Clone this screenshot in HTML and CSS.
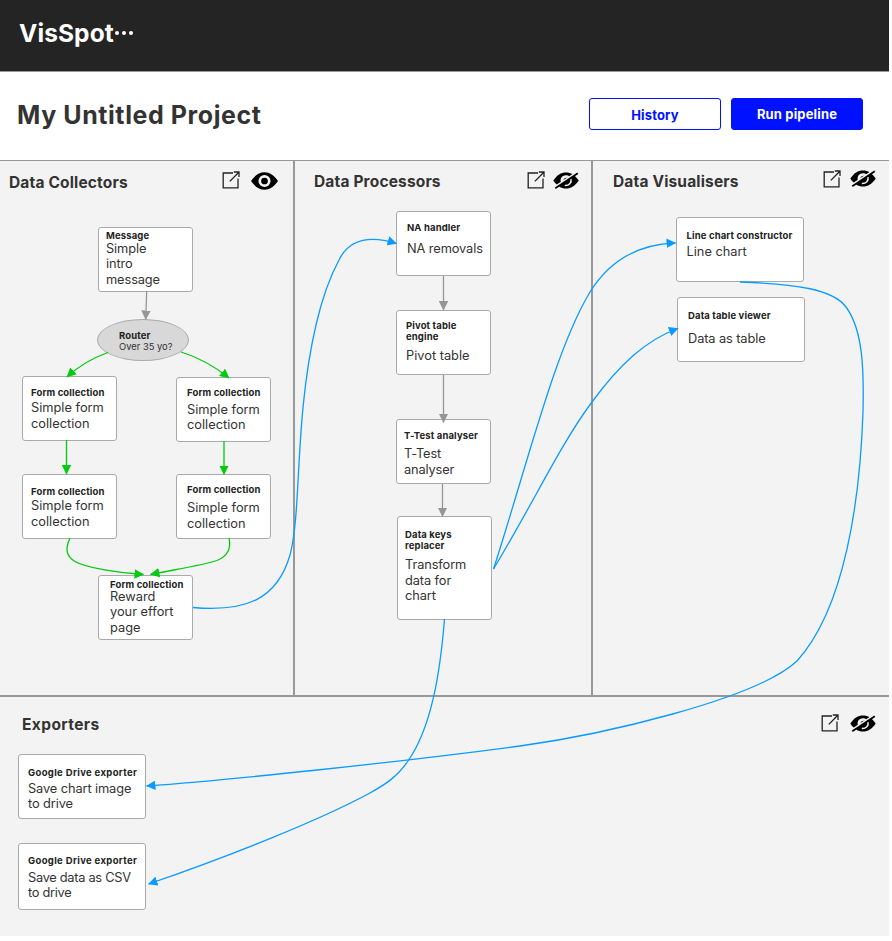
FILE: index.html
```html
<!DOCTYPE html>
<html lang="en">
<head>
<meta charset="utf-8">
<title>VisSpot</title>
<link rel="stylesheet" href="styles.css">
</head>
<body>
<svg class="defs" width="0" height="0" aria-hidden="true">
  <symbol id="i-open" viewBox="0 0 18 18"><path d="M11 2H1.200V16.800H16V7.500M7.800 10.400 16.800 1.200M11.800 1H17V6" fill="none" stroke="#222" stroke-width="1.300"/></symbol>
  <symbol id="i-eye" viewBox="0 0 27 18"><path d="M0 9C4 3.300 8.300 .3 13.500 .3S23 3.300 27 9C23 14.700 18.700 17.700 13.500 17.700S4 14.700 0 9Z"/><circle cx="13.500" cy="9" r="4.700" fill="none" stroke="#f3f3f3" stroke-width="2.700"/></symbol>
  <symbol id="i-hidden" viewBox="0 0 26 17"><path d="M.3 8.500C4 3 8 .4 13 .4S22 3 25.700 8.500C22 14 18 16.600 13 16.600S4 14 .3 8.500Z"/><path d="M8.600 11.400C6 7.500 8.800 3.300 13 3.300C14.300 3.300 15.300 3.600 16.300 4.400L14.500 5.900C11.600 5.600 10 7.400 10.500 9.500Z" fill="#f3f3f3"/><path d="M17.900 7C19 10.600 16 13.900 11.800 13.600" fill="none" stroke="#f3f3f3" stroke-width="1.500"/><path d="M1.400 15.600 23.900 .5" stroke="#f3f3f3" stroke-width="2.400"/><path d="M2.300 16.300 24.800 1.200" stroke="#000" stroke-width="1.700"/></symbol>
</svg>
<div class="page">
  <header class="topbar"><span class="brand">VisSpot</span><span class="dots"><i></i><i></i><i></i></span></header>
  <div class="titlebar">
    <h1>My Untitled Project</h1>
    <div class="actions"><button class="btn outline">History</button><button class="btn solid">Run pipeline</button></div>
  </div>
  <main class="board">
    <section class="panel collectors"><h2>Data Collectors</h2><svg class="open"><use href="#i-open"/></svg><svg class="eye"><use href="#i-eye"/></svg></section>
    <section class="panel processors"><h2>Data Processors</h2><svg class="open"><use href="#i-open"/></svg><svg class="hidden"><use href="#i-hidden"/></svg></section>
    <section class="panel visualisers"><h2>Data Visualisers</h2><svg class="open"><use href="#i-open"/></svg><svg class="hidden"><use href="#i-hidden"/></svg></section>
    <section class="panel exporters"><h2>Exporters</h2><svg class="open"><use href="#i-open"/></svg><svg class="hidden"><use href="#i-hidden"/></svg></section>
  </main>
  <div class="canvas">
    <div class="node message"><b>Message</b><p>Simple<br>intro<br>message</p></div>
    <div class="node router"><b>Router</b><p>Over 35 yo?</p></div>
    <div class="node form-a"><b>Form collection</b><p>Simple form<br>collection</p></div>
    <div class="node form-b"><b>Form collection</b><p>Simple form<br>collection</p></div>
    <div class="node form-c"><b>Form collection</b><p>Simple form<br>collection</p></div>
    <div class="node form-d"><b>Form collection</b><p>Simple form<br>collection</p></div>
    <div class="node reward"><b>Form collection</b><p>Reward<br>your effort<br>page</p></div>
    <div class="node na"><b>NA handler</b><p>NA removals</p></div>
    <div class="node pivot"><b>Pivot table<br>engine</b><p>Pivot table</p></div>
    <div class="node ttest"><b>T-Test analyser</b><p>T-Test<br>analyser</p></div>
    <div class="node keys"><b>Data keys<br>replacer</b><p>Transform<br>data for<br>chart</p></div>
    <div class="node line"><b>Line chart constructor</b><p>Line chart</p></div>
    <div class="node table"><b>Data table viewer</b><p>Data as table</p></div>
    <div class="node drive-a"><b>Google Drive exporter</b><p>Save chart image<br>to drive</p></div>
    <div class="node drive-b"><b>Google Drive exporter</b><p>Save data as CSV<br>to drive</p></div>
    <svg class="edges" width="889" height="936" viewBox="0 0 889 936">
      <defs>
        <marker id="m-grey" viewBox="0 0 9 9" markerWidth="9.500" markerHeight="9.500" refX="8.500" refY="4.500" orient="auto" markerUnits="userSpaceOnUse"><path d="M0 0 9 4.500 0 9Z" fill="#969696"/></marker>
        <marker id="m-green" viewBox="0 0 9 9" markerWidth="9.500" markerHeight="9.500" refX="8.500" refY="4.500" orient="auto" markerUnits="userSpaceOnUse"><path d="M0 0 9 4.500 0 9Z" fill="#00cb0e"/></marker>
        <marker id="m-blue" viewBox="0 0 9 9" markerWidth="9.500" markerHeight="9.500" refX="8.500" refY="4.500" orient="auto" markerUnits="userSpaceOnUse"><path d="M0 0 9 4.500 0 9Z" fill="#0a9bff"/></marker>
      </defs>
      <g class="grey">
        <path d="M146.700 291 145.700 319.500"/><path d="M443.500 275.500V310"/><path d="M443.500 375V422.500"/><path d="M442.500 484V516.500"/>
      </g>
      <g class="green">
        <path d="M108 352.500Q84 361 67 377"/><path d="M181 352Q207 360 229 378"/>
        <path d="M66.500 440V474"/><path d="M224 441V474.500"/>
        <path d="M70 538C65 549 66 556 75 561.500C86 568 120 573 143.500 574.500"/>
        <path d="M229 538C231.500 549 228 556 217 560.500C204 565 172 570 150.500 574.500"/>
      </g>
      <g class="blue">
        <path d="M193 607.500C245 612 277 600 290 555C302 510 294 420 316 325C323 294 333 271 340 258C351 238 372 236 396.500 243.500"/>
        <path d="M493.500 569C528 462 555 350 590 292C610 260 640 244 675.500 243"/>
        <path d="M493.500 569C535 500 560 445 592 402C620 364 646 340 678 328.500"/>
        <path d="M740 282C795 284 833 289 846 307C863 330 864 370 863 412C860 500 845 608 797 661C755 700 600 735 520 746C400 762 230 780 146.500 786"/>
        <path d="M444.500 619C440 675 431 728 408 761C397 777 386 784 370 793C320 820 230 856 148.500 884"/>
      </g>
    </svg>
  </div>
</div>
</body>
</html>
```
FILE: styles.css
```css
* { box-sizing: border-box; }
body { margin: 0; background: #fff; color: #333; font-family: Inter, "Liberation Sans", sans-serif; }
.defs { position: absolute; }
.page { position: relative; width: 889px; height: 936px; display: flex; flex-direction: column; }
.topbar { height: 72px; background: #242424; border-bottom: 1px solid #999; display: flex; align-items: center; padding: 0 0 5px 19px; color: #fff; }
.brand { font-size: 24.500px; font-weight: 700; letter-spacing: .1px; }
.dots { display: flex; gap: 2.500px; margin-left: 1px; }
.dots i { width: 4.500px; height: 4.500px; border-radius: 50%; background: #fff; }
.titlebar { height: 88px; display: flex; align-items: center; justify-content: space-between; padding: 0 26px 4px 17px; }
h1 { margin: 2px 0 0; font-size: 25px; font-weight: 700; letter-spacing: .58px; white-space: nowrap; }
.actions { display: flex; gap: 10px; }
.btn { width: 132px; height: 32px; padding: 0; border: 1.500px solid #0011ff; border-radius: 3px; font: 700 13px Inter, sans-serif; letter-spacing: .15px; }
.outline { background: #fff; color: #0011ff; padding-top: 2px; }
.solid { background: #0011ff; color: #fff; }
.board { flex: 1; display: grid; grid-template-columns: 295px 298px 1fr; grid-template-rows: 536px 1fr; border-top: 1px solid #999; background: #f3f3f3; }
.panel { display: flex; align-items: flex-start; border-bottom: 2px solid #999; }
.collectors, .processors { border-right: 2px solid #999; }
.exporters { grid-column: 1 / -1; border-bottom: 0; }
h2 { margin: 0; font-size: 15.500px; line-height: 20px; font-weight: 700; letter-spacing: .16px; white-space: nowrap; }
.open { width: 18px; height: 18px; margin-left: auto; }
.eye { width: 27px; height: 18px; margin-left: 11px; }
.hidden { width: 26px; height: 17px; margin-left: 8px; }
.collectors { padding: 10px 15px 0 9px; }
.collectors h2 { margin-top: 2px; }
.collectors .eye { margin-top: 1px; }
.processors { padding: 10px 12px 0 19px; }
.processors h2 { margin-top: 1px; }
.processors .hidden { margin-top: 1px; }
.visualisers { padding: 9px 13px 0 20px; }
.visualisers h2 { margin-top: 2px; }
.visualisers .hidden { margin-left: 9px; }
.exporters { padding: 17px 13px 0 22px; }
.exporters h2 { margin-top: 1px; letter-spacing: .4px; }
.exporters .hidden { margin-left: 11px; margin-top: 1px; }

.canvas, .edges { position: absolute; left: 0; top: 0; }
.node { position: absolute; width: 95px; height: 65px; padding-left: 8px; border: 1.500px solid #aaa; border-radius: 3px; background: #fff; white-space: nowrap; }
.node b { display: block; font-size: 9.500px; line-height: 11px; font-weight: 700; letter-spacing: .13px; color: #222; }
.node p { margin: 0; font-size: 12.800px; line-height: 15.600px; color: #333; }
.message { left: 98px; top: 226.500px; padding: 2px 0 0 7px; }
.message p { margin-top: 0; letter-spacing: -.1px; }
.node.router { left: 97px; top: 319px; width: 92px; height: 42px; border-radius: 50%; background: #d8d8d8; padding: 10px 0 0 21px; }
.node.router p { font-size: 9.400px; line-height: 11px; }
.form-a { left: 22px; top: 375.500px; padding-top: 10px; }
.form-a p { margin-top: 2.500px; }
.form-b { left: 176px; top: 376.500px; padding: 9px 0 0 10px; }
.form-b p { margin-top: 4px; }
.form-c { left: 22px; top: 473.500px; padding-top: 11px; }
.form-c p { margin-top: 1.500px; }
.form-d { left: 176px; top: 473.500px; padding: 9px 0 0 10px; }
.form-d p { margin-top: 5.500px; }
.reward { left: 98px; top: 574.500px; padding: 3px 0 0 11px; }
.reward p { margin-top: -1px; }
.na { left: 396px; top: 211px; padding: 10px 0 0 10px; }
.na p { margin-top: 8px; letter-spacing: -.1px; }
.pivot { left: 396px; top: 310px; padding: 8.500px 0 0 9px; }
.pivot p { margin-top: 6.500px; }
.ttest { left: 396px; top: 419px; padding: 10px 0 0 7px; }
.ttest p { margin-top: 5px; letter-spacing: -.15px; }
.node.keys { left: 397px; top: 516px; height: 104px; padding: 12px 0 0 7px; }
.keys p { margin-top: 6px; letter-spacing: -.1px; }
.line, .table, .drive-a, .drive-b { width: 127.500px; }
.line { left: 676px; top: 217px; padding: 12px 0 0 9.500px; }
.line p { margin-top: 2.500px; }
.table { left: 677px; top: 297px; padding: 12px 0 0 10px; }
.table p { margin-top: 10px; letter-spacing: -.1px; }
.drive-a { left: 18px; top: 754px; padding: 12px 0 0 9px; }
.drive-a p { margin-top: 2.500px; letter-spacing: -.1px; }
.node.drive-b { left: 18px; top: 842.500px; height: 67px; padding: 11px 0 0 9px; }
.drive-b p { margin-top: 4px; letter-spacing: -.28px; }
.drive-a b, .drive-b b { letter-spacing: .35px; }
.edges { fill: none; stroke-width: 1.300; }
.grey path { stroke: #969696; marker-end: url(#m-grey); }
.green path { stroke: #00cb0e; marker-end: url(#m-green); }
.blue path { stroke: #0a9bff; marker-end: url(#m-blue); }
.edges marker path { marker-end: none; }
```
